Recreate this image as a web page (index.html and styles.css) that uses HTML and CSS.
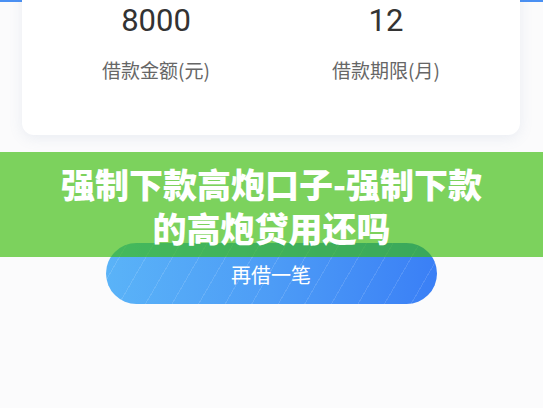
FILE: index.html
```html
<!DOCTYPE html>
<html lang="zh-CN">
  <head>
    <meta charset="UTF-8" />
    <meta name="viewport" content="width=device-width, initial-scale=1.0" />
    <title>借款详情</title>
    <link rel="stylesheet" href="styles.css">
  </head>
  <body>
    <div class="page">
      <div class="top-bar"></div>
      <div class="info-card">
        <div class="info-item">
          <div class="info-value">8000</div>
          <div class="info-label">借款金额(元)</div>
        </div>
        <div class="info-item">
          <div class="info-value">12</div>
          <div class="info-label">借款期限(月)</div>
        </div>
      </div>
      <div class="actions">
        <button class="btn-again" type="button">再借一笔</button>
      </div>
      <div class="title-banner">
        <h1>强制下款高炮口子-强制下款<br>的高炮贷用还吗</h1>
      </div>
    </div>
  </body>
</html>
```

FILE: styles.css
```css
* {
  margin: 0;
  padding: 0;
  box-sizing: border-box;
}

body {
  background: #fbfbfc;
  font-family: "Noto Sans CJK SC", "Noto Sans", sans-serif;
  overflow: hidden;
}

.page {
  position: relative;
  width: 543px;
  height: 408px;
}

.top-bar {
  height: 2px;
  background: #4a90f3;
}

.info-card {
  display: grid;
  grid-template-columns: 1fr 1fr;
  margin: -22px 23px 0 22px;
  padding: 21px 19px 52px;
  background: #ffffff;
  border-radius: 12px;
  box-shadow: 0 3px 14px rgba(110, 130, 170, 0.12);
}

.info-item {
  display: flex;
  flex-direction: column;
  align-items: center;
}

.info-value {
  font-family: Roboto, "Noto Sans CJK SC", sans-serif;
  font-size: 31px;
  line-height: 40px;
  color: #333333;
}

.info-label {
  margin-top: 16px;
  font-family: "Noto Sans CJK SC", sans-serif;
  font-size: 19px;
  line-height: 26px;
  color: #666666;
}

.actions {
  display: flex;
  justify-content: center;
  margin-top: 108px;
  padding-right: 1px;
}

.btn-again {
  width: 331px;
  height: 61px;
  border: none;
  border-radius: 31px;
  background:
    repeating-linear-gradient(-60deg, rgba(255, 255, 255, 0) 0 22px, rgba(255, 255, 255, 0.12) 22px 23px),
    linear-gradient(90deg, #5ab3f8 0%, #4d9cf6 50%, #3a7ff6 100%);
  font-family: "Noto Sans CJK SC", sans-serif;
  font-size: 20px;
  color: #ffffff;
  padding-top: 2px;
}

/* title strip laid over the page */
.title-banner {
  position: absolute;
  left: 0;
  top: 152px;
  width: 100%;
  height: 105px;
  display: flex;
  align-items: center;
  justify-content: center;
  background: rgba(58, 188, 11, 0.66);
}

.title-banner h1 {
  font-family: "Noto Sans CJK SC", sans-serif;
  font-weight: 900;
  font-size: 34px;
  line-height: 44px;
  color: #ffffff;
  text-align: center;
  padding-top: 2px;
}
```
